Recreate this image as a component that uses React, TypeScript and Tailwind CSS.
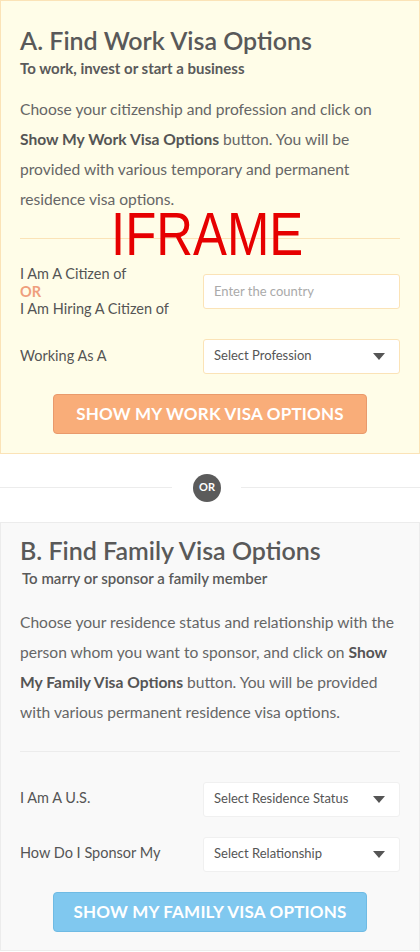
import React from "react";

const font = { fontFamily: "Lato, 'Open Sans', sans-serif" };

const Caret = () => (
  <svg width="12" height="7" viewBox="0 0 12 7" className="shrink-0">
    <path d="M0 0 H12 L6 7 Z" fill="#555" />
  </svg>
);

const SelectBox = ({ label, border }: { label: string; border: string }) => (
  <div
    className={`flex h-[35px] items-center justify-between rounded-[3px] border bg-white pl-[10px] pr-[14px] text-[13px] text-[#555] ${border}`}
  >
    <span>{label}</span>
    <Caret />
  </div>
);

const App: React.FC = () => {
  return (
    <div className="relative w-[420px] bg-white" style={font}>
      {/* section A */}
      <div className="border border-[#fbe3b7] bg-[#fffde8] px-[19px] pb-[19px] pt-[24px]">
        <h2 className="text-[25px] font-semibold leading-[30px] text-[#595959]">
          A. Find Work Visa Options
        </h2>
        <p className="mt-[3px] text-[15px] font-bold leading-[20px] text-[#5a5a5a]">
          To work, invest or start a business
        </p>
        <p className="mt-[16px] text-[15.6px] leading-[30px] text-[#666]">
          Choose your citizenship and profession and click on{" "}
          <b className="font-bold text-[#555]">Show My Work Visa Options</b> button. You will be
          provided with various temporary and permanent residence visa options.
        </p>
        <div className="mt-[24px] border-t border-[#fbe3b7]" />

        <div className="mt-[26px] grid grid-cols-[183px_1fr] items-center">
          <div className="text-[14.5px] leading-[17.5px] text-[#555]">
            <div>I Am A Citizen of</div>
            <div className="font-bold text-[#ef9f7d]">OR</div>
            <div>I Am Hiring A Citizen of</div>
          </div>
          <div className="flex h-[35px] items-center rounded-[3px] border border-[#fbe3b7] bg-white pl-[10px] text-[13px] text-[#aaa]">
            Enter the country
          </div>
        </div>

        <div className="mt-[21px] grid grid-cols-[183px_1fr] items-center">
          <div className="text-[14.5px] text-[#555]">Working As A</div>
          <SelectBox label="Select Profession" border="border-[#fbe3b7]" />
        </div>

        <div className="mt-[20px] flex justify-center">
          <button className="h-[40px] w-[314px] rounded-[4px] border border-[#e99a6c] bg-[#f9ad79] text-[17px] font-bold uppercase tracking-[0.2px] text-white">
            Show My Work Visa Options
          </button>
        </div>
      </div>

      {/* OR divider */}
      <div className="flex h-[68px] items-center">
        <div className="h-px w-[172px] bg-[#ececec]" />
        <div className="ml-[21px] mr-[20px] flex h-[28px] w-[28px] items-center justify-center rounded-full bg-[#5b5b5b] text-[11px] font-bold text-white">
          OR
        </div>
        <div className="h-px flex-1 bg-[#ececec]" />
      </div>

      {/* section B */}
      <div className="border border-[#ececec] bg-[#f9f9f9] px-[19px] pb-[18px] pt-[12px]">
        <h2 className="text-[25px] font-semibold leading-[30px] text-[#595959]">
          B. Find Family Visa Options
        </h2>
        <p className="mt-[3px] pl-[2px] text-[15px] font-semibold leading-[20px] text-[#5a5a5a]">
          To marry or sponsor a family member
        </p>
        <p className="mt-[19px] text-[15.6px] leading-[30px] text-[#666]">
          Choose your residence status and relationship with the person whom you want to sponsor,
          and click on <b className="font-bold text-[#555]">Show My Family Visa Options</b> button.
          You will be provided with various permanent residence visa options.
        </p>
        <div className="mt-[24px] border-t border-[#ececec]" />

        <div className="mt-[30px] grid grid-cols-[183px_1fr] items-center">
          <div className="-mt-[2px] text-[14.5px] text-[#555]">I Am A U.S.</div>
          <SelectBox label="Select Residence Status" border="border-[#f0f0f0]" />
        </div>
        <div className="mt-[20px] grid grid-cols-[183px_1fr] items-center">
          <div className="-mt-[2px] text-[14.5px] text-[#555]">How Do I Sponsor My</div>
          <SelectBox label="Select Relationship" border="border-[#f0f0f0]" />
        </div>

        <div className="mt-[20px] flex justify-center">
          <button className="h-[40px] w-[314px] rounded-[4px] border border-[#6fbbe4] bg-[#80c8ef] text-[17px] font-bold uppercase tracking-[0.2px] text-white">
            Show My Family Visa Options
          </button>
        </div>
      </div>

      {/* iframe placeholder label */}
      <div className="pointer-events-none absolute left-0 top-[203px] w-[415px] text-center">
        <span
          className="inline-block scale-x-[0.82] text-[62px] leading-[62px] text-[#e60000]"
          style={{ fontFamily: "'Liberation Sans', Arial, sans-serif" }}
        >
          IFRAME
        </span>
      </div>
    </div>
  );
};

export default App;
